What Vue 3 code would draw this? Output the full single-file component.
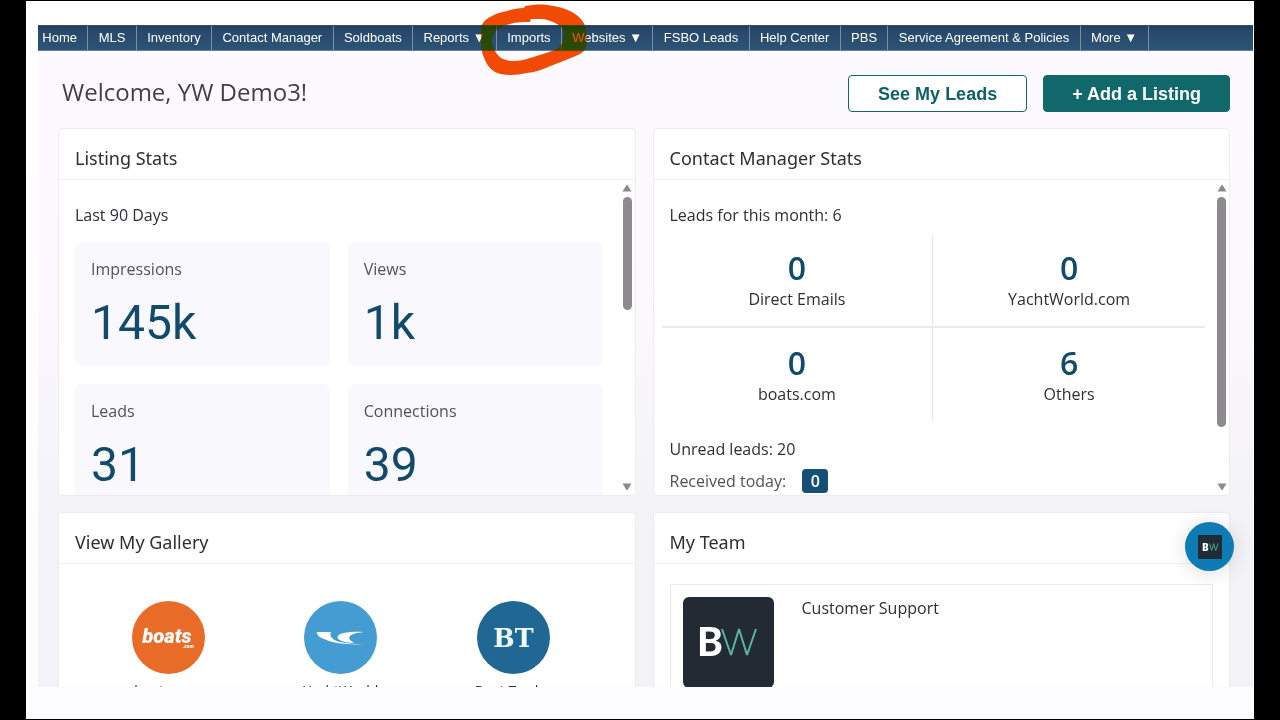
<script setup>
const nav = [
  { label: 'Home' },
  { label: 'MLS' },
  { label: 'Inventory' },
  { label: 'Contact Manager' },
  { label: 'Soldboats' },
  { label: 'Reports ▼' },
  { label: 'Imports', marked: true },
  { label: 'Websites ▼' },
  { label: 'FSBO Leads' },
  { label: 'Help Center' },
  { label: 'PBS' },
  { label: 'Service Agreement & Policies' },
  { label: 'More ▼' },
]
const stats = [
  { label: 'Impressions', value: '145k' },
  { label: 'Views', value: '1k' },
  { label: 'Leads', value: '31' },
  { label: 'Connections', value: '39' },
]
const sources = [
  { label: 'Direct Emails', value: 0 },
  { label: 'YachtWorld.com', value: 0 },
  { label: 'boats.com', value: 0 },
  { label: 'Others', value: 6 },
]
</script>

<template>
  <div class="stage">
    <div class="slide">
      <div class="portal">
        <nav class="nav">
          <ul>
            <li v-for="n in nav" :key="n.label">
              <a href="#">{{ n.label }}</a>
              <svg v-if="n.marked" class="marker" viewBox="480 0 110 78" aria-hidden="true">
                <path
                  fill="#f04a05"
                  fill-rule="evenodd"
                  d="M524 8 L525 6 C532 5 540 4 547 5 C556 6 564 8 570 11 C578 15 583 20 585 26 C587 32 587 42 586 46 C585 51 582 53 578 55 C570 58 562 62 553 65 C544 69 536 72 527 73 C521 74 516 75 510 75 C504 75 499 74 495 72 C490 69 487 65 485 60 C482 54 481 48 481 42 L481 28 C482 24 484 20 490 17 C495 14 501 12 507 11 C513 9 518 8 524 8 Z M530 22 C523 22 517 22 510 24 C505 25 501 27 498 29 C493 33 492 37 492 41 C492 44 493 47 494 49 C496 53 498 56 501 58 C505 60 509 61 513 61 C519 61 525 60 530 58 C540 55 550 52 557 49 C561 46 563 43 563 39 C564 35 564 31 562 28 C559 25 556 23 553 22 C548 20 545 19 542 19 L531 19 Z"
                />
              </svg>
            </li>
          </ul>
        </nav>

        <main class="main">
          <header class="top">
            <h1>Welcome, YW Demo3!</h1>
            <div class="actions">
              <button type="button" class="btn outline">See My Leads</button>
              <button type="button" class="btn solid">+ Add a Listing</button>
            </div>
          </header>

          <div class="grid">
            <section class="card">
              <h2>Listing Stats</h2>
              <div class="body">
                <h3>Last 90 Days</h3>
                <div class="tiles">
                  <div v-for="s in stats" :key="s.label" class="tile">
                    <div class="tile-label">{{ s.label }}</div>
                    <div class="tile-value">{{ s.value }}</div>
                  </div>
                </div>
                <div class="scroll">
                  <svg viewBox="0 0 10 8"><path d="M0.500 7.500 L4.500 1 H5.500 L9.500 7.500 Z" /></svg>
                  <div class="track"><div class="thumb short"></div></div>
                  <svg viewBox="0 0 10 8"><path d="M0.500 0.500 L4.500 7 H5.500 L9.500 0.500 Z" /></svg>
                </div>
              </div>
            </section>

            <section class="card">
              <h2>Contact Manager Stats</h2>
              <div class="body">
                <h3>Leads for this month: 6</h3>
                <div class="sources">
                  <div v-for="s in sources" :key="s.label" class="source">
                    <div class="source-value">{{ s.value }}</div>
                    <div class="source-label">{{ s.label }}</div>
                  </div>
                </div>
                <div class="unread">Unread leads: 20</div>
                <div class="received">Received today: <span class="badge">0</span></div>
                <div class="scroll">
                  <svg viewBox="0 0 10 8"><path d="M0.500 7.500 L4.500 1 H5.500 L9.500 7.500 Z" /></svg>
                  <div class="track"><div class="thumb long"></div></div>
                  <svg viewBox="0 0 10 8"><path d="M0.500 0.500 L4.500 7 H5.500 L9.500 0.500 Z" /></svg>
                </div>
              </div>
            </section>

            <section class="card">
              <h2>View My Gallery</h2>
              <div class="gallery">
                <a href="#" class="site">
                  <svg viewBox="0 0 72 72" class="logo">
                    <circle cx="36" cy="36" r="36" fill="#e86b28" />
                    <text x="10" y="41" class="boats">boats</text>
                    <text x="50" y="46" class="com">.com</text>
                  </svg>
                  <span>boats.com</span>
                </a>
                <a href="#" class="site">
                  <svg viewBox="0 0 72 72" class="logo">
                    <circle cx="36" cy="36" r="36" fill="#449cd2" />
                    <path fill="#fff" d="M12.500 30.500 H27 C25 33 26 36 31 39 C38 42 48 42 59 43 C42 43 30 42 21 38 C15 36 12.500 33 12.500 30.500 Z" />
                    <path fill="#fff" d="M59 30.500 C46 30 33 31 33 36 C34 39 38 40.500 50 41.500 C45 39 44 37 45 35 C46 33 50 31.500 59 30.500 Z" />
                  </svg>
                  <span>YachtWorld</span>
                </a>
                <a href="#" class="site">
                  <svg viewBox="0 0 72 72" class="logo">
                    <circle cx="36" cy="36" r="36" fill="#216793" />
                    <text x="36" y="45" text-anchor="middle" class="bt">BT</text>
                  </svg>
                  <span>Boat Trader</span>
                </a>
              </div>
            </section>

            <section class="card">
              <h2>My Team</h2>
              <div class="member">
                <svg viewBox="0 0 91 91" class="bw">
                  <rect width="91" height="91" rx="6" fill="#222b33" />
                  <text x="14" y="59" class="bw-b">B</text>
                  <path d="M39 32 L48 58 L56 32 L64 58 L73 32" fill="none" stroke="#5bb5a2" stroke-width="2" stroke-linejoin="bevel" />
                </svg>
                <div class="member-name">Customer Support</div>
              </div>
            </section>
          </div>
        </main>

        <button type="button" class="chat" aria-label="Open chat">
          <svg viewBox="0 0 24 24">
            <rect width="24" height="24" fill="#202c35" />
            <text x="4" y="16" class="chat-b">B</text>
            <path d="M11.500 8.500 L13.700 15.500 L15.700 8.500 L17.700 15.500 L20 8.500" fill="none" stroke="#4f9d8e" stroke-linejoin="bevel" />
          </svg>
        </button>
      </div>
    </div>
  </div>
</template>

<style>
body {
  margin: 0;
  background: #000;
}
</style>

<style scoped>
* {
  box-sizing: border-box;
}
.stage {
  height: 100vh;
  padding: 1px 26px;
  background: #000;
  font-family: 'Open Sans', sans-serif;
  color: #2d2f33;
}
.slide {
  height: 100%;
  padding: 24px 1px 32px 12px;
  background: linear-gradient(#fff, #fdfcfe);
}
.portal {
  position: relative;
  display: flex;
  flex-direction: column;
  height: 100%;
}
.nav {
  border-top: 1px solid #35506c;
  border-bottom: 1px solid #63809b;
  background: linear-gradient(#203c5b, #28496a 20%, #2c5375);
}
ul {
  display: flex;
  width: 91.4%;
  margin: 0;
  padding: 0;
  list-style: none;
}
li {
  position: relative;
  flex: 1 0 auto;
  border-right: 1px solid #7890a8;
}
li a {
  display: block;
  padding: 0 10px;
  font: 13px/24px 'Liberation Sans', Arial, sans-serif;
  color: #fff;
  text-align: center;
  text-decoration: none;
  white-space: nowrap;
}
li:first-child a {
  padding-left: 4px;
}
.marker {
  position: absolute;
  z-index: 2;
  top: -26px;
  left: -17px;
  width: 110px;
  height: 78px;
  mix-blend-mode: darken;
  pointer-events: none;
}
.main {
  flex: 1;
  min-height: 0;
  overflow: hidden;
  padding: 24px 23px 0 20px;
  background: linear-gradient(#fcfafe, #fbf9fd 40%, #f3f2f6 75%);
}
.top {
  display: flex;
  align-items: center;
  justify-content: space-between;
  height: 37px;
  margin-bottom: 16px;
}
h1 {
  margin: 0;
  padding: 0 0 4px 4px;
  font-size: 24px;
  line-height: 32px;
  font-weight: 400;
  color: #414045;
}
.actions {
  display: flex;
  gap: 16px;
}
.btn {
  height: 37px;
  padding: 0 28px;
  border: 1px solid #10686b;
  border-radius: 4px;
  font: bold 18px/24px 'Liberation Sans', Arial, sans-serif;
}
.outline {
  padding: 0 29px;
  background: #fff;
  color: #0e6165;
}
.solid {
  background: #10686b;
  color: #fff;
}
.grid {
  display: grid;
  grid-template-columns: 1fr 1fr;
  grid-template-rows: 368px auto;
  gap: 16px 17px;
}
.card {
  display: flex;
  flex-direction: column;
  min-width: 0;
  overflow: hidden;
  border: 1px solid #ecebef;
  border-radius: 4px;
  background: #fff;
}
h2 {
  flex: none;
  height: 51px;
  margin: 0;
  padding: 4px 16px 0;
  border-bottom: 1px solid #efeef1;
  font-family: 'Noto Sans', 'Open Sans', sans-serif;
  font-size: 18px;
  line-height: 50px;
  font-weight: 400;
}
h3,
.unread {
  margin: 0;
  font-size: 16px;
  line-height: 24px;
  font-weight: 400;
}
.body {
  position: relative;
  flex: 1;
  min-height: 0;
  overflow: hidden;
  padding: 23px 32px 0 16px;
}
.tiles {
  display: grid;
  grid-template-columns: 1fr 1fr;
  gap: 18px;
  margin-top: 15px;
}
.tile {
  height: 124px;
  padding: 15px 16px;
  border-radius: 6px;
  background: #f9f8fd;
}
.tile-label {
  font-size: 16px;
  line-height: 24px;
  color: #515257;
}
.tile-value {
  margin-top: 14px;
  font: 48px/56px Roboto, sans-serif;
  color: #124a6c;
}
.scroll {
  position: absolute;
  top: 4px;
  right: 2px;
  bottom: 4px;
  display: flex;
  flex-direction: column;
  align-items: center;
  width: 11px;
}
.scroll svg {
  width: 10px;
  height: 8px;
  fill: #8c8a8d;
}
.track {
  flex: 1;
  padding: 5px 0;
}
.thumb {
  width: 9px;
  border-radius: 5px;
  background: #8c8a8d;
}
.short {
  height: 38%;
  min-height: 113px;
}
.long {
  height: 78%;
  min-height: 230px;
}
.sources {
  display: grid;
  grid-template-columns: 1fr 1fr;
  margin: 8px -8px 0;
}
.source {
  height: 93px;
  padding-top: 15px;
  text-align: center;
}
.source:nth-child(odd) {
  border-right: 1px solid #e8e7ea;
}
.source:nth-child(-n + 2) {
  padding-top: 13px;
  border-bottom: 2px solid #e8e7ea;
}
.source-value {
  font-size: 32px;
  line-height: 40px;
  font-weight: 600;
  color: #124a6c;
}
.source-label {
  font-size: 16px;
  line-height: 22px;
}
.unread {
  margin-top: 16px;
}
.received {
  display: flex;
  align-items: center;
  gap: 16px;
  margin-top: 8px;
  font-size: 16px;
  line-height: 24px;
  color: #515257;
}
.badge {
  width: 26px;
  border-radius: 4px;
  background: #154f76;
  color: #fff;
  font-weight: 600;
  text-align: center;
}
.gallery {
  display: grid;
  grid-template-columns: 1fr 1fr 1fr;
  padding: 37px 35px 16px 23px;
}
.site {
  display: flex;
  flex-direction: column;
  align-items: center;
  gap: 7px;
  font-size: 14px;
  line-height: 20px;
  color: #2d2f33;
  text-decoration: none;
}
.logo {
  width: 73px;
  height: 73px;
}
.boats {
  font: italic 900 20px Roboto, sans-serif;
  fill: #fff;
}
.com {
  font: italic 900 5px Roboto, sans-serif;
  fill: #fff;
}
.bt {
  font: bold 25px 'DejaVu Serif', serif;
  fill: #effaff;
}
.member {
  display: flex;
  gap: 28px;
  margin: 20px 16px 16px;
  padding: 12px;
  border: 1px solid #eceaee;
}
.bw {
  flex: none;
  width: 91px;
  height: 91px;
}
.bw-b {
  font: 900 39px Lato, sans-serif;
  fill: #fff;
}
.member-name {
  font-size: 16px;
  line-height: 22px;
}
.chat {
  position: absolute;
  right: 19px;
  bottom: 116px;
  display: grid;
  place-items: center;
  width: 49px;
  height: 49px;
  padding: 0;
  border: 0;
  border-radius: 50%;
  background: #0e7cb4;
  box-shadow: 0 2px 20px #00000024;
}
.chat svg {
  width: 24px;
  height: 24px;
}
.chat-b {
  font: 800 10px 'Open Sans', sans-serif;
  fill: #fff;
}
</style>
